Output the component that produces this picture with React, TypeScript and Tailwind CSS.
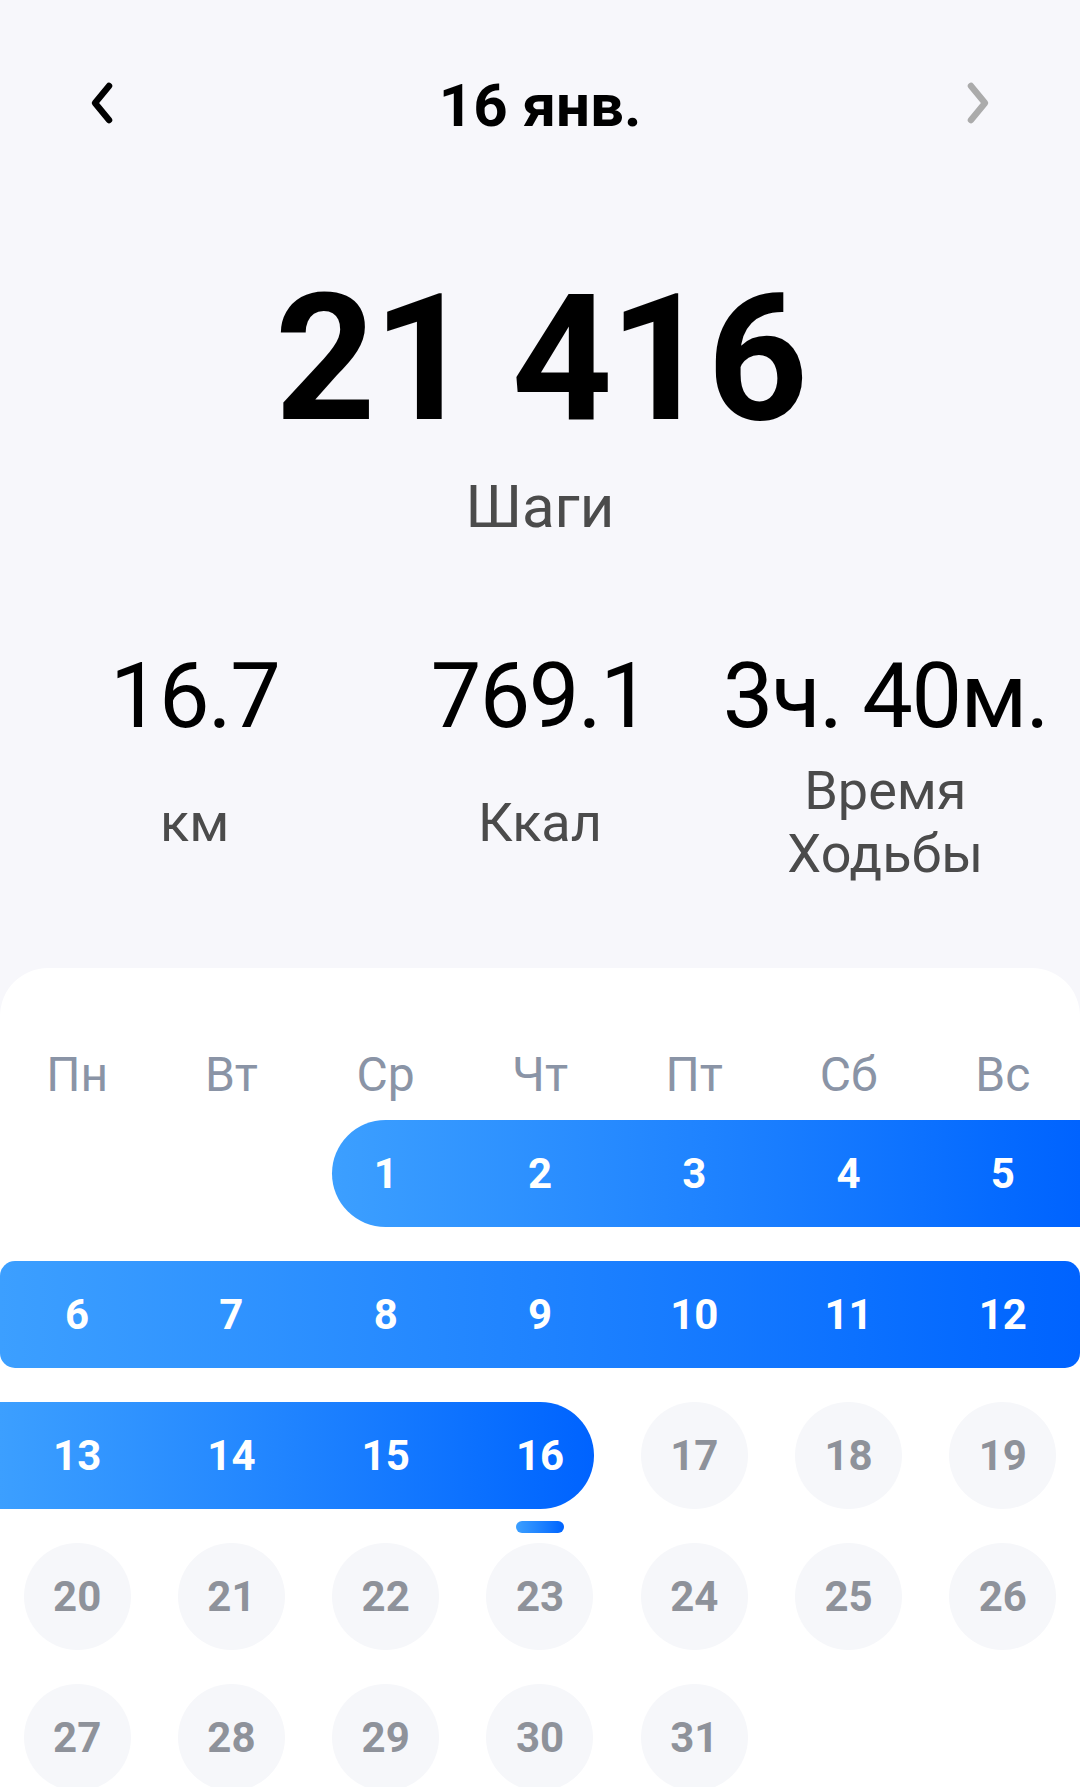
import React from "react";

const COLS = ["col-start-1", "col-start-2", "col-start-3", "col-start-4", "col-start-5", "col-start-6", "col-start-7"];
const WEEKDAYS = ["Пн", "Вт", "Ср", "Чт", "Пт", "Сб", "Вс"];
const BLUE = "bg-linear-to-r from-[#3c9fff] to-[#0063ff]";

type Week = {
  days: (number | null)[];
  band?: string;
};

const WEEKS: Week[] = [
  { days: [null, null, 1, 2, 3, 4, 5], band: "col-start-3 col-end-8 ml-[23.5px] rounded-l-full rounded-r-[15px]" },
  { days: [6, 7, 8, 9, 10, 11, 12], band: "col-start-1 col-end-8 rounded-[15px]" },
  { days: [13, 14, 15, 16, 17, 18, 19], band: "col-start-1 col-end-5 mr-[23.5px] rounded-l-[15px] rounded-r-full" },
  { days: [20, 21, 22, 23, 24, 25, 26] },
  { days: [27, 28, 29, 30, 31, null, null] },
];

const TODAY = 16;

function Chevron({ dir, color }: { dir: "left" | "right"; color: string }) {
  return (
    <svg width="26" height="44" viewBox="0 0 26 44" fill="none" className="-mt-[6px]">
      <path
        d={dir === "left" ? "M19 5 L5 22 L19 39" : "M7 5 L21 22 L7 39"}
        stroke={color}
        strokeWidth="6.5"
        strokeLinecap="round"
        strokeLinejoin="round"
      />
    </svg>
  );
}

function WeekRow({ week }: { week: Week }) {
  return (
    <div className="grid grid-cols-7 h-[107px]">
      {week.band && <div className={`row-start-1 h-full ${week.band} ${BLUE}`} />}
      {week.days.map((d, i) => {
        if (d === null) return null;
        const active = d <= TODAY;
        return (
          <div key={d} className={`${COLS[i]} row-start-1 relative flex items-center justify-center`}>
            {active ? (
              <span className="text-[42px] font-bold text-white leading-none">{d}</span>
            ) : (
              <div className="w-[107px] h-[107px] rounded-full bg-[#f6f7fa] flex items-center justify-center">
                <span className="text-[42px] font-bold text-[#8e929a] leading-none">{d}</span>
              </div>
            )}
            {d === TODAY && (
              <div className={`absolute left-1/2 -translate-x-1/2 top-[119px] w-[48px] h-[12px] rounded-full ${BLUE}`} />
            )}
          </div>
        );
      })}
    </div>
  );
}

export default function App() {
  const stats = [
    { value: "16.7", label: ["км"] },
    { value: "769.1", label: ["Ккал"] },
    { value: "3ч. 40м.", label: ["Время", "Ходьбы"] },
  ];

  return (
    <div
      className="w-[1080px] h-[1787px] overflow-hidden bg-[#f7f7fb] flex flex-col"
      style={{ fontFamily: "Roboto, 'Noto Sans', sans-serif" }}
    >
      {/* Header */}
      <div className="pt-[76px] px-[90px] flex items-center justify-between">
        <Chevron dir="left" color="#000000" />
        <h1 className="text-[60px] font-bold leading-none text-black">16 янв.</h1>
        <Chevron dir="right" color="#ababab" />
      </div>

      {/* Steps */}
      <div className="mt-[135px] text-center text-[176px] font-bold leading-none tracking-[-3px] text-black">21 416</div>
      <div className="mt-[30px] text-center text-[60px] leading-none text-[#4b4b4b]">Шаги</div>

      {/* Stats */}
      <div className="mt-[115px] grid grid-cols-3 px-[22px]">
        {stats.map(s => (
          <div key={s.value} className="flex flex-col items-center">
            <div className="text-[90px] leading-none tracking-[-1.5px] text-black whitespace-nowrap">{s.value}</div>
            <div className="mt-[17px] h-[126px] flex flex-col justify-center items-center text-[54px] leading-[63px] text-[#4b4b4b]">
              {s.label.map(l => (
                <span key={l}>{l}</span>
              ))}
            </div>
          </div>
        ))}
      </div>

      {/* Calendar */}
      <div className="mt-[83px] flex-1 bg-white rounded-t-[48px] pt-[83px]">
        <div className="grid grid-cols-7 text-center text-[48px] leading-none text-[#8a94a6]">
          {WEEKDAYS.map(w => (
            <span key={w}>{w}</span>
          ))}
        </div>
        <div className="mt-[21px] flex flex-col gap-[34px]">
          {WEEKS.map((w, i) => (
            <WeekRow key={i} week={w} />
          ))}
        </div>
      </div>
    </div>
  );
}
